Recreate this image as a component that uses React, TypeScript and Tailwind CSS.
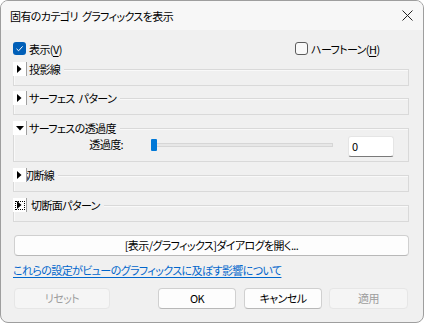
import React from "react";

const FONT = "[font-family:'Noto_Sans_CJK_JP','Noto_Sans',sans-serif] [font-feature-settings:'palt'] tracking-[-0.6px]";

function Tri({ dir }: { dir: "right" | "down" }) {
  return dir === "right" ? (
    <svg width="5" height="8" viewBox="0 0 5 8"><path d="M0 0 L4.5 4 L0 8 Z" fill="#000" /></svg>
  ) : (
    <svg width="8" height="5" viewBox="0 0 8 5"><path d="M0 0 L8 0 L4 4.5 Z" fill="#000" /></svg>
  );
}

function Group({
  title,
  mt,
  h,
  dir = "right",
  focus = false,
  clip = false,
  children,
}: {
  title: React.ReactNode;
  mt: string;
  h: string;
  dir?: "right" | "down";
  focus?: boolean;
  clip?: boolean;
  children?: React.ReactNode;
}) {
  return (
    <div className={`${mt} ${h} w-[396px] border border-[#d9d9d9] shadow-[inset_1px_1px_0_#f9f9f9]`}>
      <div className="-ml-px -mt-[8px] flex h-[14px] items-center">
        <div className="relative z-10 flex h-[14px] w-[14px] items-center justify-center border-r border-[#a0a0a0] bg-white">
          <div className={`flex items-center justify-center ${focus ? "h-[9px] w-[10px] border border-dotted border-[#000]" : "h-[10px] w-[10px]"}`}>
            <Tri dir={dir} />
          </div>
        </div>
        <span className={`bg-[#f0f0f0] pr-[4px] text-[11px] leading-[14px] text-black ${clip ? "-ml-[4px]" : focus ? "pl-[4px]" : "pl-[2px]"}`}>
          {title}
        </span>
      </div>
      {children}
    </div>
  );
}

function Btn({ children, disabled = false, w }: { children: React.ReactNode; disabled?: boolean; w: string }) {
  return (
    <div
      className={`flex h-[21px] ${w} items-center justify-center rounded-[4px] border text-[11px] ${
        disabled
          ? "border-[#e6e6e6] bg-[#f5f5f5] text-[#9d9d9d]"
          : "border-[#d0d0d0] border-b-[#b8b8b8] bg-[#fdfdfd] text-black"
      }`}
    >
      {children}
    </div>
  );
}

export default function App() {
  return (
    <div className="h-[323px] w-[424px] bg-white">
      <div className={`${FONT} flex h-[323px] w-[424px] flex-col overflow-hidden rounded-[8px] border border-[#9e9e9e] bg-[#f0f0f0] text-[11px] text-black`}>
        <div className="flex h-[29px] shrink-0 items-center justify-between bg-[#f7f7f7] pl-[9px] pr-[10px]">
          <span className="text-[11px] leading-[14px]">
            固有のカテゴリ<span className="inline-block w-[4px]"> </span>グラフィックスを表示
          </span>
          <svg width="11" height="11" viewBox="0 0 11 11">
            <path d="M0.5 0.5 L10.5 10.5 M10.5 0.5 L0.5 10.5" stroke="#222" strokeWidth="1" />
          </svg>
        </div>
        <div className="flex flex-col pl-[12px]">
          <div className="mt-[12px] flex h-[13px] w-[396px] items-center">
            <div className="flex h-[13px] w-[13px] items-center justify-center rounded-[3px] bg-[#005fb8]">
              <svg width="9" height="9" viewBox="0 0 9 9">
                <path d="M1.5 4.8 L3.6 6.8 L7.6 2.4" stroke="#fff" strokeWidth="1" fill="none" />
              </svg>
            </div>
            <span className="ml-[3px] w-[266px] text-[11px] leading-[14px]">
              表示(<span className="underline underline-offset-2">V</span>)
            </span>
            <div className="flex h-[13px] w-[13px] rounded-[3px] border border-[#5c5c5c] bg-[#f9f9f9]" />
            <span className="ml-[3px] text-[11px] leading-[14px]">
              ハーフトーン(<span className="underline underline-offset-2">H</span>)
            </span>
          </div>

          <Group title="投影線" mt="mt-[14px]" h="h-[17px]" />
          <Group
            title={
              <>
                サーフェス<span className="inline-block w-[4px]"> </span>パターン
              </>
            }
            mt="mt-[12px]"
            h="h-[17px]"
          />
          <Group title="サーフェスの透過度" mt="mt-[13px]" h="h-[34px]" dir="down">
            <div className="mt-[1px] flex h-[21px] items-start">
              <span className="mt-[1px] w-[109px] text-right text-[11px] leading-[14px]">透過度:</span>
              <div className="relative ml-[28px] mt-[3px] h-[12px] w-[182px]">
                <div className="absolute left-0 right-0 top-[4px] h-[4px] border border-[#d6d6d6] bg-[#e7e7e7]" />
                <div className="absolute left-0 top-0 h-[12px] w-[6px] rounded-[1px] bg-[#0078d7]" />
              </div>
              <div className="ml-[15px] flex h-[21px] w-[46px] items-center rounded-[3px] border border-[#e5e5e5] border-b-[#7a7a7a] bg-white pl-[3px] text-[11px]">
                0
              </div>
            </div>
          </Group>
          <Group title="切断線" mt="mt-[13px]" h="h-[17px]" clip />
          <Group title="切断面パターン" mt="mt-[13px]" h="h-[17px]" focus />

          <div className="ml-px mt-[13px]">
            <Btn w="w-[395px]">[表示/グラフィックス]ダイアログを開く...</Btn>
          </div>
          <div className="mt-[6px] h-[16px] text-[11px] leading-[16px] text-[#0066cc] underline underline-offset-2">
            これらの設定がビューのグラフィックスに及ぼす影響について
          </div>
          <div className="ml-px mt-[10px] flex">
            <Btn w="w-[96px]" disabled>リセット</Btn>
            <div className="ml-[48px]">
              <Btn w="w-[78px]">OK</Btn>
            </div>
            <div className="ml-[8px]">
              <Btn w="w-[78px]">キャンセル</Btn>
            </div>
            <div className="ml-[7px]">
              <Btn w="w-[79px]" disabled>適用</Btn>
            </div>
          </div>
        </div>
      </div>
    </div>
  );
}
